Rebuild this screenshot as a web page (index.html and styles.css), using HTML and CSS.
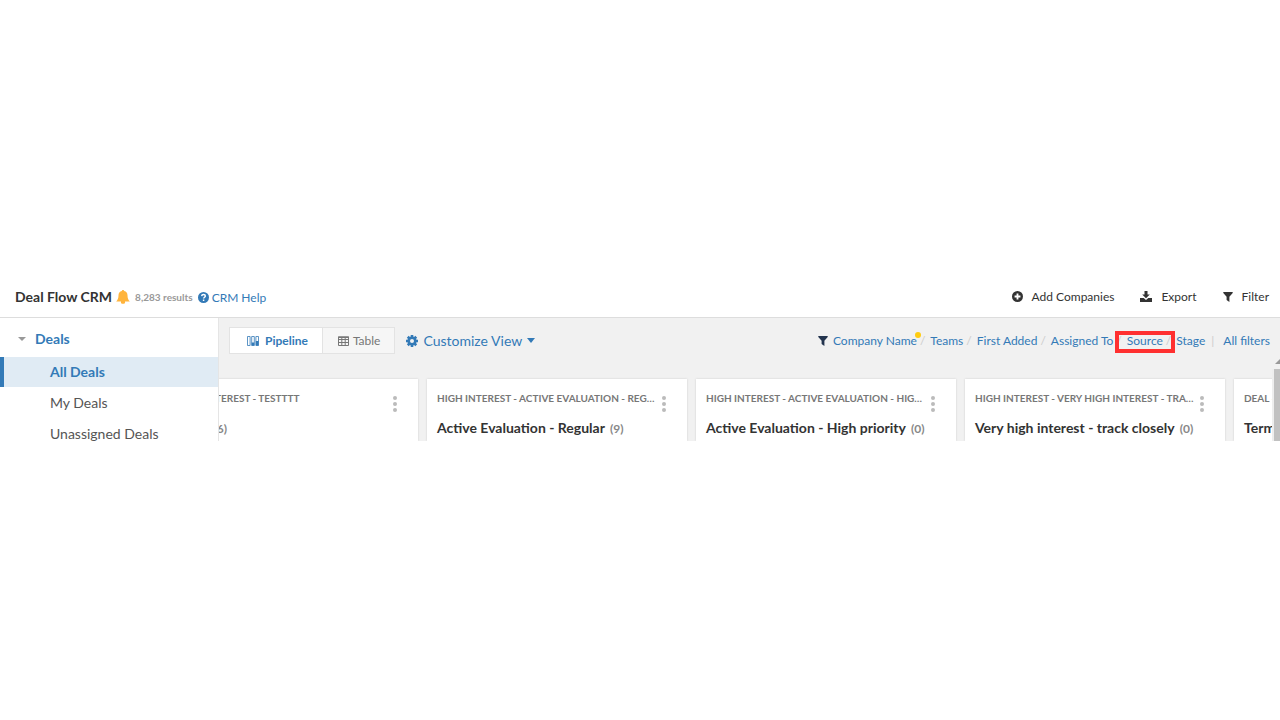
FILE: index.html
```html
<!DOCTYPE html>
<html lang="en">
<head>
    <meta charset="UTF-8">
    <meta name="viewport" content="width=device-width, initial-scale=1.0">
    <title>Deal Flow CRM</title>
    <link rel="stylesheet" href="styles.css">
</head>
<body>
    <div class="app">
        <header class="header">
            <h1>Deal Flow CRM</h1>
            <svg class="bell" width="14" height="14" viewBox="0 0 14 14"><path d="M7 0c.7 0 1.100.4 1.100 1 2.300.5 3.400 2.100 3.400 4.200 0 3 .7 4.500 2.300 6.200H.2C1.800 9.700 2.500 8.200 2.500 5.200c0-2.100 1.100-3.700 3.400-4.200 0-.6.4-1 1.100-1zM5 11.400h4A2 2 0 0 1 7 13.800a2 2 0 0 1-2-2.400z" fill="#ffb43c"/></svg>
            <span class="results">8,283 results</span>
            <a class="help" href="#help">
                <svg width="11" height="11" viewBox="0 0 12 12"><circle cx="6" cy="6" r="6" fill="#337ab7"/><path d="M4 4.500C4.100 3.300 4.900 2.700 6 2.700s2 .7 2 1.700c0 1.300-1.900 1.400-1.900 2.800M6.100 8.300v1.500" fill="none" stroke="#fff" stroke-width="1.600"/></svg>
                CRM Help
            </a>
            <div class="actions">
                <button type="button" class="action">
                    <svg width="11" height="11" viewBox="0 0 12 12"><circle cx="6" cy="6" r="6" fill="#333"/><path d="M6 2.800v6.400M2.800 6h6.400" stroke="#fff" stroke-width="2"/></svg>
                    Add Companies
                </button>
                <button type="button" class="action">
                    <svg width="12" height="11" viewBox="0 0 12 11"><path d="M4.500 0h3v3.500h2.300L6 7.300 2.200 3.500h2.300zM0 7h3.700L6 9l2.300-2H12v4H0z" fill="#333"/></svg>
                    Export
                </button>
                <button type="button" class="action">
                    <svg width="10" height="10" viewBox="0 0 10 10"><path d="M.3 0h9.400v1L6.400 4.700V10L3.600 8V4.700L.3 1z" fill="#333"/></svg>
                    Filter
                </button>
            </div>
        </header>

        <div class="workspace">
            <nav class="sidebar">
                <a class="group" href="#deals"><span class="caret"></span>Deals</a>
                <ul>
                    <li><a class="active" href="#all">All Deals</a></li>
                    <li><a href="#my">My Deals</a></li>
                    <li><a href="#unassigned">Unassigned Deals</a></li>
                </ul>
            </nav>

            <main class="main">
                <div class="toolbar">
                    <div class="views">
                        <button type="button" class="view active">
                            <svg width="12" height="10" viewBox="0 0 12 10"><path d="M.5.5h2.600v9H.5zM4.700.5h2.600v9H4.700zM8.900.5h2.600v9H8.900z" fill="#fff" stroke="#337ab7" stroke-width=".8"/><path d="M4.700 6.500h2.600v3H4.700zM8.900 5h2.600v4.500H8.900z" fill="#337ab7"/></svg>
                            Pipeline
                        </button>
                        <button type="button" class="view">
                            <svg width="11" height="10" viewBox="0 0 11 10"><path d="M.5 1h10v8.500H.5zM.5 3.500h10M.5 6.500h10M3.800 1v8.500M7.200 1v8.500" fill="none" stroke="#777"/><path d="M0 .5h11v1.500H0z" fill="#777"/></svg>
                            Table
                        </button>
                    </div>
                    <button type="button" class="customize">
                        <svg width="12" height="12" viewBox="0 0 12 12"><g fill="#337ab7"><path d="M4.700 0h2.600v12H4.700zM0 4.700h12v2.600H0z"/><path d="M4.700 0h2.600v12H4.700zM0 4.700h12v2.600H0z" transform="rotate(45 6 6)"/></g><circle cx="6" cy="6" r="3.300" fill="none" stroke="#337ab7" stroke-width="2.600"/><circle cx="6" cy="6" r="2" fill="#f1f1f1"/></svg>
                        Customize View
                        <span class="caret"></span>
                    </button>
                    <div class="filters">
                        <svg width="10" height="10" viewBox="0 0 10 10"><path d="M.3 0h9.400v1L6.400 4.700V10L3.600 8V4.700L.3 1z" fill="#23344e"/></svg>
                        <a class="dot" href="#company">Company Name</a><i>/</i>
                        <a href="#teams">Teams</a><i>/</i>
                        <a href="#added">First Added</a><i>/</i>
                        <a href="#assigned">Assigned To</a><i>/</i>
                        <a class="marked" href="#source">Source</a><i>/</i>
                        <a href="#stage">Stage</a><i class="bar">|</i>
                        <a href="#filters">All filters</a>
                    </div>
                </div>

                <div class="board">
                    <div class="lists">
                        <section class="list">
                            <div class="path">1 HIGH INTEREST - TESTTTT</div>
                            <button type="button" class="more" aria-label="More"></button>
                            <h2>Testttt <small>(6)</small></h2>
                        </section>
                        <section class="list">
                            <div class="path">HIGH INTEREST - ACTIVE EVALUATION - REGULAR</div>
                            <button type="button" class="more" aria-label="More"></button>
                            <h2>Active Evaluation - Regular <small>(9)</small></h2>
                        </section>
                        <section class="list">
                            <div class="path">HIGH INTEREST - ACTIVE EVALUATION - HIGH PRIORITY</div>
                            <button type="button" class="more" aria-label="More"></button>
                            <h2>Active Evaluation - High priority <small>(0)</small></h2>
                        </section>
                        <section class="list">
                            <div class="path">HIGH INTEREST - VERY HIGH INTEREST - TRACK CLOSELY</div>
                            <button type="button" class="more" aria-label="More"></button>
                            <h2>Very high interest - track closely <small>(0)</small></h2>
                        </section>
                        <section class="list">
                            <div class="path">DEAL - TERM</div>
                            <button type="button" class="more" aria-label="More"></button>
                            <h2>Term</h2>
                        </section>
                    </div>
                    <div class="scrollbar"></div>
                </div>
            </main>
        </div>
    </div>
</body>
</html>
```

FILE: styles.css
```css
* {
    box-sizing: border-box;
}
body {
    margin: 0;
    padding-bottom: 1px;
    min-height: 100vh;
    display: flex;
    flex-direction: column;
    justify-content: center;
    background: #fff;
    color: #333;
    font-family: Lato, "Liberation Sans", sans-serif;
    font-size: 12px;
    line-height: 16px;
}
a {
    color: #337ab7;
    text-decoration: none;
}
button {
    margin: 0;
    padding: 0;
    border: 0;
    background: none;
    color: inherit;
    font: inherit;
    cursor: pointer;
}
svg {
    flex: none;
}
h1, h2, ul {
    margin: 0;
    padding: 0;
}

/* Header */
.header {
    display: flex;
    align-items: center;
    height: 40px;
    padding: 0 11px 2px 15px;
    border-bottom: 1px solid #ddd;
}
h1 {
    font-size: 14px;
    font-weight: bold;
}
.bell {
    margin: 0 5px 0 4px;
}
.results {
    color: #999;
    font-size: 10px;
    font-weight: bold;
}
.help {
    display: flex;
    align-items: center;
    gap: 3px;
    margin-left: 5px;
    padding-top: 2px;
}
.actions {
    display: flex;
    gap: 26px;
    margin-left: auto;
}
.action {
    display: flex;
    align-items: center;
    gap: 9px;
}

/* Sidebar */
.workspace {
    display: flex;
    overflow: hidden;
}
.sidebar {
    flex: none;
    width: 219px;
    margin-bottom: -1px;
    border-right: 1px solid #e5e5e5;
}
.caret {
    border: 4px solid transparent;
    border-top-color: currentColor;
    border-bottom: 0;
}
.group {
    display: flex;
    align-items: center;
    gap: 9px;
    height: 39px;
    padding: 2px 18px 0;
    font-size: 14px;
    font-weight: bold;
}
.group .caret {
    color: #999;
}
.sidebar ul {
    display: grid;
    gap: 1px;
    list-style: none;
}
.sidebar li a {
    display: block;
    padding: 7px 0 7px 46px;
    border-left: 4px solid transparent;
    color: #555;
    font-size: 14px;
}
.sidebar li:last-child a {
    padding-bottom: 0;
}
.sidebar li a.active {
    background: #e0ebf4;
    border-left-color: #337ab7;
    color: #337ab7;
    font-weight: bold;
}

/* Toolbar */
.main {
    flex: 1;
    min-width: 0;
    display: flex;
    flex-direction: column;
    background: #f1f1f1;
}
.toolbar {
    display: flex;
    align-items: center;
    height: 45px;
    padding: 0 10px;
}
.views {
    display: flex;
    height: 27px;
    border: 1px solid #e3e3e3;
}
.view {
    display: flex;
    align-items: center;
    gap: 4px;
    padding: 0 14px 0 15px;
    background: #f6f6f6;
    color: #777;
}
.view.active {
    gap: 6px;
    padding: 0 14px 0 17px;
    border-right: 1px solid #e3e3e3;
    background: #fff;
    color: #337ab7;
    font-weight: bold;
}
.customize {
    display: flex;
    align-items: center;
    gap: 5px;
    margin-left: 11px;
    color: #337ab7;
    font-size: 14px;
}
.customize .caret {
    border-top-width: 5px;
}
.filters {
    display: flex;
    align-items: center;
    margin-left: auto;
}
.filters a {
    position: relative;
    margin-left: 5px;
}
.filters i {
    margin-left: 3px;
    color: #ccc;
    font-style: normal;
}
.filters .bar {
    margin: 0 4px 0 6px;
}
.dot::after {
    content: "";
    position: absolute;
    top: -1px;
    right: -4px;
    width: 6px;
    height: 6px;
    border-radius: 50%;
    background: #fc1;
}
.marked::after {
    content: "";
    position: absolute;
    inset: -2px -12px -4px;
    border: 4px solid #ff3030;
}

/* Board */
.board {
    flex: 1;
    display: flex;
}
.lists {
    flex: 1;
    min-width: 0;
    display: flex;
    gap: 9px;
    padding-top: 16px;
    overflow: hidden;
}
.list {
    flex: none;
    display: grid;
    grid-template-columns: 1fr 20px;
    grid-template-rows: 16px 16px;
    row-gap: 14px;
    width: 260px;
    padding: 11px 10px 0;
    background: #fff;
    box-shadow: 0 0 2px #ccc;
}
/* the board is scrolled a little to the right */
.list:first-child {
    margin-left: -61px;
}
.path {
    overflow: hidden;
    color: #777;
    font-size: 10px;
    font-weight: bold;
    text-overflow: ellipsis;
    white-space: nowrap;
}
.more {
    width: 4px;
    height: 4px;
    margin: 12px 11px 0 auto;
    border-radius: 50%;
    background: #bbb;
    box-shadow: 0 -6px #bbb, 0 6px #bbb;
}
h2 {
    grid-column: 1 / -1;
    font-size: 14px;
    white-space: nowrap;
}
h2 small {
    margin-left: 2px;
    color: #888;
    font-size: 12px;
}
.scrollbar {
    position: relative;
    width: 8px;
    margin-top: 6px;
    border-left: 2px solid #eee;
    background: #c1c1c1;
}
.scrollbar::before {
    content: "";
    position: absolute;
    top: -10px;
    left: 1px;
    border: 5px solid transparent;
    border-top: 0;
    border-bottom-color: #999;
}
```
